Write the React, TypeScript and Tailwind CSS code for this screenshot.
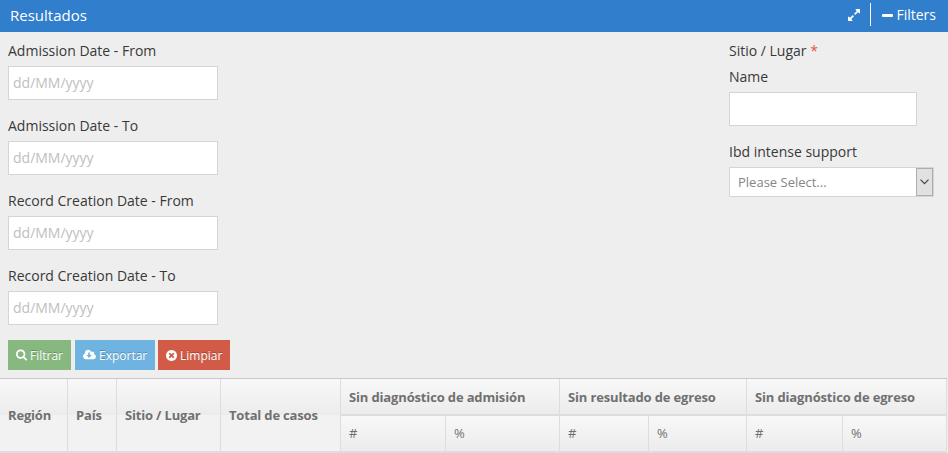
import React from "react";

type IconProps = { className?: string; viewBox: string; d: string };

function Icon({ className, viewBox, d }: IconProps) {
  return (
    <svg className={className} viewBox={viewBox} fill="currentColor" aria-hidden="true">
      <path d={d} />
    </svg>
  );
}

const SEARCH =
  "M1152 832q0-185-131.5-316.5T704 384 387.5 515.5 256 832t131.5 316.5T704 1280t316.5-131.5T1152 832zm512 832q0 52-38 90t-90 38q-54 0-90-38l-343-342q-179 124-399 124-143 0-273.5-55.5t-225-150-150-225T0 832t55.5-273.5 150-225 225-150T704 128t273.5 55.5 225 150 150 225T1408 832q0 220-124 399l343 343q37 37 37 90z";
const CLOUD =
  "M1280 928q0-14-9-23t-23-9h-224V544q0-13-9.500-22.500T992 512H800q-13 0-22.500 9.500T768 544v352H544q-13 0-22.500 9.500T512 928q0 14 9 23l352 352q9 9 23 9t23-9l351-351q10-12 10-24zm640 224q0 159-112.500 271.500T1536 1536H448q-185 0-316.500-131.500T0 1088q0-130 70-240t188-165q-2-30-2-43 0-212 150-362t362-150q156 0 285.500 87T1242 446q71-62 166-62 106 0 181 75t75 181q0 76-41 138 130 31 213.500 135.500T1920 1152z";
const TIMES =
  "M1277 1122q0-26-19-45l-181-181 181-181q19-19 19-45 0-27-19-46l-90-90q-19-19-46-19-26 0-45 19l-181 181-181-181q-19-19-45-19-27 0-46 19l-90 90q-19 19-19 46 0 26 19 45l181 181-181 181q-19 19-19 45 0 27 19 46l90 90q19 19 46 19 26 0 45-19l181-181 181 181q19 19 45 19 27 0 46-19l90-90q19-19 19-46zm387-226q0 209-103 385.500t-279.500 279.500-385.500 103-385.500-103-279.500-279.500-103-385.500 103-385.500 279.500-279.500 385.500-103 385.500 103 279.500 279.500 103 385.500z";
const EXPAND =
  "M883 1056q0 13-10 23l-332 332 144 144q19 19 19 45t-19 45-45 19H192q-26 0-45-19t-19-45v-448q0-26 19-45t45-19 45 19l144 144 332-332q10-10 23-10t23 10l114 114q10 10 10 23zm781-864v448q0 26-19 45t-45 19-45-19l-144-144-332 332q-10 10-23 10t-23-10L919 759q-10-10-10-23t10-23l332-332-144-144q-19-19-19-45t19-45 45-19h448q26 0 45 19t19 45z";

const dateFields = [
  "Admission Date - From",
  "Admission Date - To",
  "Record Creation Date - From",
  "Record Creation Date - To",
];

const spanHeads = [
  { label: "Región", width: "w-[68px]" },
  { label: "País", width: "w-[49px]" },
  { label: "Sitio / Lugar", width: "w-[104px]" },
  { label: "Total de casos", width: "w-[120px]" },
];

const groups = [
  { label: "Sin diagnóstico de admisión", first: "w-[105px]", second: "w-[114px]" },
  { label: "Sin resultado de egreso", first: "w-[89px]", second: "w-[98px]" },
  { label: "Sin diagnóstico de egreso", first: "w-[96px]", second: "w-[104px]" },
];

const grad = "bg-gradient-to-b from-[#f8f8f8] to-[#ececec]";
const button =
  "flex h-[30px] items-center pl-2 text-[12px] text-white [text-shadow:0_-1px_0_rgba(0,0,0,0.25)]";

export default function App() {
  return (
    <div className="h-[453px] w-[948px] overflow-hidden bg-[#eeeeee] font-['Open_Sans','Noto_Sans',sans-serif] text-sm text-[#393939]">
      <header className="flex h-8 items-center bg-[#307ecc] pr-[12px] pl-[10px] text-white">
        <h1 className="flex-1 pb-[2px] text-[15px] leading-[30px]">Resultados</h1>
        <Icon className="mr-[9px] size-[14px] -mt-[2px]" viewBox="0 0 1792 1792" d={EXPAND} />
        <span className="mr-[11px] -mt-[3px] h-[23px] w-px bg-white" />
        <span className="mr-[3px] -mt-[2px] h-[3px] w-[11px] rounded-[1px] bg-white" />
        <span className="pb-[2px] text-[14px] leading-[30px]">Filters</span>
      </header>

      <main className="flex h-[308px] justify-between pt-[9px] pl-2">
        <div>
          {dateFields.map((label) => (
            <div key={label} className="h-[75px]">
              <label className="block h-[25px] leading-5">{label}</label>
              <input
                placeholder="dd/MM/yyyy"
                className="block h-[34px] w-[210px] border border-[#d5d5d5] bg-white px-1 pb-[2px] text-sm placeholder:text-[#c0c0c0]"
              />
            </div>
          ))}
        </div>
        <div className="w-[219px]">
          <div className="h-[26px] leading-5">
            Sitio / Lugar <span className="text-[#dd5a43]">*</span>
          </div>
          <div className="h-[75px]">
            <label className="block h-[25px] leading-5">Name</label>
            <input className="block h-[34px] w-[188px] border border-[#d5d5d5] bg-white px-1" />
          </div>
          <div className="h-[25px] leading-5">Ibd intense support</div>
          <div className="flex h-[30px] w-[205px] border border-[#d5d5d5] bg-white">
            <span className="flex-1 pl-2 text-[13px] leading-[28px] text-[#858585]">Please Select...</span>
            <span className="flex w-[17px] items-center justify-center border border-[#adadad] bg-[#e1e1e1] pr-px">
              <svg className="h-[6px] w-[9px]" viewBox="0 0 9 6" fill="none" stroke="#444" strokeWidth="1.2">
                <path d="M.5 .7 4.500 4.700 8.500 .7" />
              </svg>
            </span>
          </div>
        </div>
      </main>

      <div className="flex h-[38px] pl-2">
        <button className={`${button} mr-1 w-[63px] bg-[#87b87f]`}>
          <Icon className="mr-[3px] h-[12px] w-[11px] shrink-0" viewBox="0 128 1664 1664" d={SEARCH} />
          <span className="pt-px">Filtrar</span>
        </button>
        <button className={`${button} mr-[3px] w-20 bg-[#6fb3e0]`}>
          <Icon className="mr-[3px] h-[12px] w-[13px] shrink-0" viewBox="0 0 1920 1792" d={CLOUD} />
          <span className="pt-px">Exportar</span>
        </button>
        <button className={`${button} w-[72px] bg-[#d15b47]`}>
          <Icon className="mr-[3px] h-[13px] w-[11px] shrink-0" viewBox="128 0 1536 1792" d={TIMES} />
          <span className="pt-px">Limpiar</span>
        </button>
      </div>

      <section className="flex h-[75px] w-[947px] border-t border-[#c8c8c8] text-[13px] text-[#707070]">
        {spanHeads.map(({ label, width }) => (
          <div
            key={label}
            className={`${width} flex h-[74px] shrink-0 items-center whitespace-nowrap border-r border-b-2 border-[#dddddd] bg-[linear-gradient(to_bottom,#f8f8f8_0px,#ececec_36px,#f2f2f2_36px)] pl-2 font-bold tracking-[-0.18px]`}
          >
            {label}
          </div>
        ))}
        {groups.map(({ label, first, second }) => (
          <div key={label}>
            <div className={`${grad} h-[37px] whitespace-nowrap border-r border-b-2 border-[#dddddd] pl-2 leading-[36px] font-bold tracking-[-0.15px]`}>
              {label}
            </div>
            <div className="flex">
              <div className={`${grad} ${first} h-[37px] border-r border-b-2 border-[#dddddd] pl-2 leading-[35px]`}>#</div>
              <div className={`${grad} ${second} h-[37px] border-r border-b-2 border-[#dddddd] pl-2 leading-[35px]`}>%</div>
            </div>
          </div>
        ))}
      </section>
    </div>
  );
}
